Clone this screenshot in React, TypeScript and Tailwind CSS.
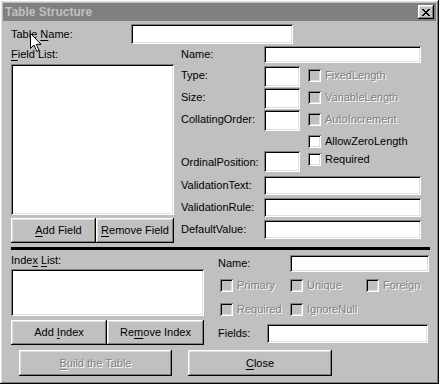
import React from "react";

// win95-style bevels
const raised =
  "shadow-[inset_-1px_-1px_#000,inset_1px_1px_#fff,inset_-2px_-2px_#808080,inset_2px_2px_#dfdfdf]";
const sunken =
  "shadow-[inset_1px_1px_#808080,inset_-1px_-1px_#fff,inset_2px_2px_#000,inset_-2px_-2px_#dfdfdf]";
const grayText = "text-[#808080] [text-shadow:1px_1px_0_#fff]";

const Box = ({ className }: { className: string }) => (
  <div className={`bg-white ${sunken} ${className}`} />
);

const Check = ({ label, disabled }: { label: string; disabled?: boolean }) => (
  <div className="flex items-center gap-[4px]">
    <div
      className={`w-[13px] h-[13px] shrink-0 ${sunken} ${
        disabled ? "bg-[#c0c0c0]" : "bg-white"
      }`}
    />
    <span className={disabled ? grayText : ""}>{label}</span>
  </div>
);

const Btn = ({
  children,
  className,
  disabled,
}: {
  children: React.ReactNode;
  className: string;
  disabled?: boolean;
}) => (
  <div
    className={`flex items-center justify-center bg-[#c0c0c0] ${raised} ${className} ${
      disabled ? grayText : ""
    }`}
  >
    <span className="whitespace-pre">{children}</span>
  </div>
);

const U = ({ children }: { children: React.ReactNode }) => (
  <span className="underline underline-offset-2">{children}</span>
);

const Cursor = () => (
  <svg
    className="absolute left-[30px] top-[33px]"
    width="13"
    height="20"
    viewBox="0 0 13 20"
  >
    <path
      d="M0.5 0.5 L0.5 15.5 L4 12 L6.8 18.5 L9 17.5 L6.3 11.3 L11 11.3 Z"
      fill="#fff"
      stroke="#000"
      strokeWidth="1"
    />
  </svg>
);

export default function App() {
  return (
    <div
      className={`relative w-[439px] h-[384px] bg-[#c0c0c0] p-[3px] text-[11px] leading-[13px] text-black ${raised} font-['Liberation_Sans',Arial,sans-serif]`}
    >
      {/* title bar */}
      <div className="flex items-center justify-between h-[18px] bg-[#808080] pl-[2px] pr-[2px]">
        <span className="font-bold text-[12px] text-[#c0c0c0]">Table Structure</span>
        <div className={`flex items-center justify-center w-[16px] h-[14px] bg-[#c0c0c0] ${raised}`}>
          <svg width="8" height="7" viewBox="0 0 8 7">
            <path
              d="M0 0h2v1h1v1h2V1h1V0h2v1H7v1H6v1H5v1h1v1h1v1h1v1H6V6H5V5H3v1H2v1H0V6h1V5h1V4h1V3H2V2H1V1H0z"
              fill="#000"
            />
          </svg>
        </div>
      </div>

      {/* table name */}
      <div className="flex items-center mt-[3px] h-[20px] pl-[8px]">
        <span className="w-[120px]">
          Table <U>N</U>ame:
        </span>
        <Box className="w-[162px] h-[20px]" />
      </div>

      {/* fields section */}
      <div className="flex pl-[8px]">
        <div className="flex flex-col w-[163px]">
          <div className="h-[20px] pt-[4px]">
            <U>F</U>ield List:
          </div>
          <Box className="w-full h-[151px]" />
          <div className="flex mt-[3px]">
            <Btn className="w-[85px] h-[25px] pl-[10px]">
              <U>A</U>dd Field
            </Btn>
            <Btn className="w-[78px] h-[25px]">
              <U>R</U>emove Field
            </Btn>
          </div>
        </div>

        <div className="flex flex-col ml-[7px]">
          <div className="flex items-center mt-[2px] h-[17px]">
            <span className="w-[83px]">Name:</span>
            <Box className="w-[157px] h-[17px]" />
          </div>
          <div className="flex mt-[3px] h-[21px]">
            <span className="w-[83px] pt-[3px]">Type:</span>
            <Box className="w-[36px] h-[21px]" />
            <div className="ml-[8px] pt-[3px]">
              <Check label="FixedLength" disabled />
            </div>
          </div>
          <div className="flex mt-[1px] h-[21px]">
            <span className="w-[83px] pt-[3px]">Size:</span>
            <Box className="w-[36px] h-[21px]" />
            <div className="ml-[8px] pt-[3px]">
              <Check label="VariableLength" disabled />
            </div>
          </div>
          <div className="flex mt-[1px] h-[21px]">
            <span className="w-[83px] pt-[3px]">CollatingOrder:</span>
            <Box className="w-[36px] h-[21px]" />
            <div className="ml-[8px] pt-[3px]">
              <Check label="AutoIncrement" disabled />
            </div>
          </div>
          <div className="flex h-[20px] pl-[127px] pt-[1px]">
            <Check label="AllowZeroLength" />
          </div>
          <div className="flex h-[21px]">
            <span className="w-[83px] pt-[5px]">OrdinalPosition:</span>
            <Box className="w-[36px] h-[21px]" />
            <div className="ml-[8px] pt-[2px]">
              <Check label="Required" />
            </div>
          </div>
          <div className="flex items-center mt-[4px] h-[19px]">
            <span className="w-[83px]">ValidationText:</span>
            <Box className="w-[157px] h-[19px]" />
          </div>
          <div className="flex items-center mt-[3px] h-[19px]">
            <span className="w-[83px]">ValidationRule:</span>
            <Box className="w-[157px] h-[19px]" />
          </div>
          <div className="flex items-center mt-[3px] h-[19px]">
            <span className="w-[83px]">DefaultValue:</span>
            <Box className="w-[157px] h-[19px]" />
          </div>
        </div>
      </div>

      {/* separator */}
      <div className="ml-[8px] mt-[4px] w-[419px] h-[3px] bg-black" />

      {/* index section */}
      <div className="flex pl-[8px]">
        <div className="flex flex-col w-[193px]">
          <div className="h-[19px] pt-[4px]">
            Inde<U>x</U> <U>L</U>ist:
          </div>
          <Box className="w-full h-[47px]" />
          <div className="flex mt-[4px]">
            <Btn className="w-[96px] h-[25px]">
              Add <U>I</U>ndex
            </Btn>
            <Btn className="w-[97px] h-[25px]">
              Re<U>m</U>ove Index
            </Btn>
          </div>
        </div>

        <div className="flex flex-col ml-[14px] w-[211px]">
          <div className="flex items-center mt-[5px] h-[17px]">
            <span className="w-[72px]">Name:</span>
            <Box className="w-[139px] h-[17px]" />
          </div>
          <div className="flex items-center mt-[6px] h-[15px] pl-[2px]">
            <div className="w-[70px]">
              <Check label="Primary" disabled />
            </div>
            <div className="w-[76px]">
              <Check label="Unique" disabled />
            </div>
            <Check label="Foreign" disabled />
          </div>
          <div className="flex items-center mt-[9px] h-[15px] pl-[2px]">
            <div className="w-[70px]">
              <Check label="Required" disabled />
            </div>
            <Check label="IgnoreNull" disabled />
          </div>
          <div className="flex items-center mt-[7px] h-[19px]">
            <span className="w-[49px]">Fields:</span>
            <Box className="w-[161px] h-[19px]" />
          </div>
        </div>
      </div>

      {/* bottom buttons */}
      <div className="flex mt-[5px] pl-[16px] gap-[16px]">
        <Btn className="w-[153px] h-[26px]" disabled>
          <U>B</U>uild the Table
        </Btn>
        <Btn className="w-[144px] h-[26px]">
          <U>C</U>lose
        </Btn>
      </div>

      <Cursor />
    </div>
  );
}
